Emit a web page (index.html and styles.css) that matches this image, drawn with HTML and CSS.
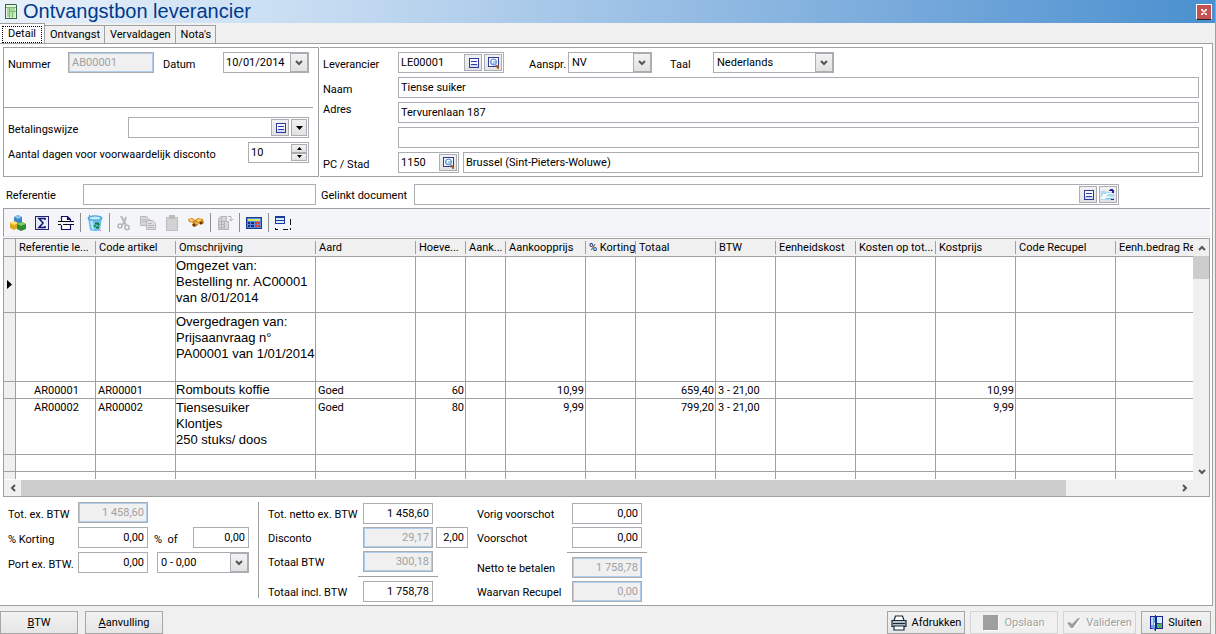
FILE: index.html
```html
<!DOCTYPE html>
<html lang="nl">
<head>
<meta charset="utf-8">
<title>Ontvangstbon leverancier</title>
<link rel="stylesheet" href="styles.css">
</head>
<body>
<svg class="sprite" aria-hidden="true">
  <symbol id="i-list" viewBox="0 0 12 12"><g shape-rendering="crispEdges"><path fill="#34389a" d="M2 1h10v10H2z"/><path fill="#f4f8ff" d="M3 2h8v5H3z"/><path fill="#cfdcf6" d="M3 7h8v3H3z"/><path fill="#34389a" d="M4 4h6v1H4zM4 7h6v1H4z"/></g></symbol>
  <symbol id="i-find" viewBox="0 0 12 12"><path fill="#34389a" d="M1 0h11v10H1z"/><path fill="#f4f8ff" d="M2 1h9v8H2z"/><circle cx="6.500" cy="5" r="3" fill="#9fcdf0" stroke="#5a88c8"/><path fill="#fff" d="M5 3h3v1H6v2H5z"/><path d="M9 8l3 4" stroke="#a85a18" stroke-width="2"/></symbol>
  <symbol id="i-folder" viewBox="0 0 14 13"><path fill="#a9dcf0" d="M0 3h5v1h8v8H0z"/><path fill="#fff" d="M2 6h3l1-1h6v1H7L5 8H2z"/><path fill="#7cc0e6" d="M1 9h11l-1 2H1z"/><path fill="#fff" d="M1 8L0 11h4l1-1h7v-1z"/><path fill="#2222a0" d="M9 1h3v1h1v3h-2V3H9zM10 11h3v1h-3zM8 2h1v1H8z"/></symbol>
  <symbol id="i-chev" viewBox="0 0 8 6"><path d="M1 1l3 3 3-3" fill="none" stroke="#555" stroke-width="2"/></symbol>
  <symbol id="i-tri" viewBox="0 0 7 4"><path d="M0 0h7L3.500 4z"/></symbol>
</svg>

<header class="titlebar">
  <svg class="titlebar__icon" viewBox="0 0 14 17"><path fill="#39654a" d="M1 1h11l1 1v14H1z"/><path fill="#e7f6df" d="M2 2h10v13H2z"/><path fill="#a5d99c" d="M3 5h2v9H3zM6 5h5v3H6z"/><path fill="#c2e8b6" d="M6 9h2v5H6zM9 9h2v5H9z"/><path fill="#7fb87c" d="M2 4h10v1H2zM5 5h1v10H5zM6 8h6v1H6zM8 9h1v6H8z"/></svg>
  <h1 class="titlebar__text">Ontvangstbon leverancier</h1>
  <button class="titlebar__close" type="button" aria-label="Sluiten"><svg width="6" height="6" viewBox="0 0 6 6"><path d="M0 .5h2M4 .5h2M0 5.500h2M4 5.500h2M1 1l4 4M5 1L1 5" stroke="#fff" stroke-width="1.500"/></svg></button>
</header>

<div class="window">
  <nav class="tabs" role="tablist">
    <button class="tab tab--active" type="button" role="tab" aria-selected="true"><span class="tab__focus">Detail</span></button>
    <button class="tab" type="button" role="tab">Ontvangst</button>
    <button class="tab" type="button" role="tab">Vervaldagen</button>
    <button class="tab" type="button" role="tab">Nota's</button>
  </nav>

  <main class="panel">
    <div class="groups">
      <section class="group group--doc">
        <div class="group__top row">
          <label class="label label--number" for="nummer">Nummer</label>
          <input class="field field--number" id="nummer" value="AB00001" disabled>
          <label class="label label--date" for="datum">Datum</label>
          <div class="box box--date"><input class="box__input" id="datum" value="10/01/2014"><button class="drop" type="button" aria-label="Kalender"><svg width="8" height="6"><use href="#i-chev"/></svg></button></div>
        </div>
        <div class="group__bottom">
          <div class="row row--between">
            <label class="label" for="betaling">Betalingswijze</label>
            <div class="box box--payment"><input class="box__input" id="betaling"><button class="mini" type="button" aria-label="Lijst"><svg width="12" height="12"><use href="#i-list"/></svg></button><button class="mini mini--narrow" type="button" aria-label="Openen"><svg width="7" height="4"><use href="#i-tri"/></svg></button></div>
          </div>
          <div class="row row--between">
            <label class="label" for="dagen">Aantal dagen voor voorwaardelijk disconto</label>
            <div class="box box--days"><input class="box__input" id="dagen" value="10"><span class="spin"><button class="spin__btn" type="button" aria-label="Meer"><svg class="flip" width="5" height="3"><use href="#i-tri"/></svg></button><button class="spin__btn" type="button" aria-label="Minder"><svg width="5" height="3"><use href="#i-tri"/></svg></button></span></div>
          </div>
        </div>
      </section>

      <section class="group group--supplier">
        <label class="label" for="lev">Leverancier</label>
        <div class="row">
          <div class="box box--supplier"><input class="box__input" id="lev" value="LE00001"><button class="mini" type="button" aria-label="Lijst"><svg width="12" height="12"><use href="#i-list"/></svg></button><button class="mini" type="button" aria-label="Zoeken"><svg width="12" height="12"><use href="#i-find"/></svg></button></div>
          <label class="label label--salutation" for="aanspr">Aanspr.</label>
          <div class="box box--salutation"><select class="box__select" id="aanspr"><option>NV</option></select><span class="drop drop--over"><svg width="8" height="6"><use href="#i-chev"/></svg></span></div>
          <label class="label label--language" for="taal">Taal</label>
          <div class="box box--language"><select class="box__select" id="taal"><option>Nederlands</option></select><span class="drop drop--over"><svg width="8" height="6"><use href="#i-chev"/></svg></span></div>
        </div>
        <label class="label" for="naam">Naam</label>
        <input class="field" id="naam" value="Tiense suiker">
        <label class="label label--top" for="adres">Adres</label>
        <input class="field" id="adres" value="Tervurenlaan 187">
        <span></span>
        <input class="field" aria-label="Adres 2">
        <label class="label" for="pc">PC / Stad</label>
        <div class="row">
          <div class="box box--postcode"><input class="box__input" id="pc" value="1150"><button class="mini" type="button" aria-label="Zoeken"><svg width="12" height="12"><use href="#i-find"/></svg></button></div>
          <input class="field field--city" aria-label="Stad" value="Brussel (Sint-Pieters-Woluwe)">
        </div>
      </section>
    </div>

    <div class="refs row">
      <label class="label label--ref" for="ref">Referentie</label>
      <input class="field field--ref" id="ref">
      <label class="label label--linked" for="doc">Gelinkt document</label>
      <div class="box box--linked"><input class="box__input" id="doc"><button class="mini" type="button" aria-label="Lijst"><svg width="12" height="12"><use href="#i-list"/></svg></button><button class="mini" type="button" aria-label="Map openen"><svg width="14" height="13"><use href="#i-folder"/></svg></button></div>
    </div>

    <div class="toolbar" role="toolbar">
      <button class="tool" type="button" aria-label="Artikelen"><svg viewBox="0 0 16 16"><path fill="#3c82c4" d="M4 2l4-2 4 2v5L8 9 4 7z"/><path fill="#8cc4ec" d="M4 2l4-2 4 2-4 2z"/><path fill="#e0a820" d="M0 8l4-2 4 2v5l-4 2-4-2z"/><path fill="#ffe27a" d="M0 8l4-2 4 2-4 2z"/><path fill="#2f8a30" d="M7 9l5-2 4 2v5l-5 2-4-2z"/><path fill="#7ccc5e" d="M7 9l5-2 4 2-5 2z"/></svg></button>
      <button class="tool" type="button" aria-label="Som"><svg viewBox="0 0 16 16"><path fill="#24246e" d="M1 1h14v14H1z"/><path fill="#e4ecfa" d="M2 2h12v12H2z"/><path d="M11 5V3.500H5L9 8l-4 4.500h6V11" fill="none" stroke="#10106a" stroke-width="1.500"/></svg></button>
      <button class="tool" type="button" aria-label="Afbreken"><svg viewBox="0 0 16 16"><path d="M3.500 7V1.500h6l3 3V7M9.500 1.500v3h3M3.500 10v4.500h9V10" fill="#fff" stroke="#10106a" stroke-width="1.200"/><path d="M0 6.500h16M0 9.500h3M5 9.500h11" stroke="#111" stroke-width="1.200"/></svg></button>
      <span class="tool-sep"></span>
      <button class="tool" type="button" aria-label="Verwijderen"><svg viewBox="0 0 16 16"><path fill="#6cc0ea" d="M1 3h14l-2 12-2 1H5l-2-1z"/><path fill="#b4e4f8" d="M3 6h3l1 9H5z"/><ellipse cx="8" cy="3" rx="7.500" ry="2.800" fill="#4aa2dc"/><ellipse cx="8" cy="3" rx="5.500" ry="1.600" fill="#c6ecfa"/><path d="M8 8.500h3l1 2M12 12.500H9M8 12l-.5-2" fill="none" stroke="#127a3a" stroke-width="1.800"/><path fill="#e040e0" d="M2 0h1v1H2zM13 15h1v1h-1z"/></svg></button>
      <span class="tool-sep"></span>
      <button class="tool" type="button" aria-label="Knippen" disabled><svg viewBox="0 0 16 16"><path d="M5 1l5 9M10 2L8 8l-2 2" stroke="#b8b8b8" stroke-width="2" fill="none"/><circle cx="4" cy="11" r="2" fill="none" stroke="#b8b8b8" stroke-width="1.600"/><circle cx="11" cy="12.500" r="2.200" fill="none" stroke="#b8b8b8" stroke-width="1.600"/></svg></button>
      <button class="tool" type="button" aria-label="Kopiëren" disabled><svg viewBox="0 0 16 16"><path fill="#d8d8d8" stroke="#b8b8b8" d="M.5 1.500h6l3 3v6h-9z"/><path fill="#dedede" stroke="#b8b8b8" d="M6.500 5.500h6l3 3v6h-9z"/><path d="M2 4.500h4M2 6.500h4M8 8.500h4M8 10.500h6M8 12.500h6" stroke="#b8b8b8"/></svg></button>
      <button class="tool" type="button" aria-label="Plakken" disabled><svg viewBox="0 0 16 16"><path fill="#d2d2d2" stroke="#bcbcbc" d="M2.500 2.500h11v13h-11z"/><path fill="#bcbcbc" d="M5 0h6v4H5z"/></svg></button>
      <button class="tool" type="button" aria-label="Zoeken"><svg viewBox="0 0 16 16"><path fill="#d08c20" d="M0 4l4-1 3 2 3-2 5 1 1 4-2 1-3-1-1 2-3 2-3-2 1-2-4-1z"/><path fill="#f8d070" d="M1 4l3 0 2 2-3 1zM8 5l3-1 3 1-3 2z"/><circle cx="6" cy="10" r="1.600" fill="#6a3408"/><circle cx="13" cy="8" r="1.600" fill="#6a3408"/><path fill="#f0b040" d="M7 7h3v2H7z"/></svg></button>
      <span class="tool-sep"></span>
      <button class="tool" type="button" aria-label="Overnemen" disabled><svg viewBox="0 0 16 16"><path fill="#d4d4d4" stroke="#b4b4b4" d="M1.500 3.500l2-2h6v9l-2 4h-6z"/><path d="M1 6.500h8M1 9.500h8M1 12.500h7M4.500 3v11" stroke="#b4b4b4"/><path fill="#d8d8d8" stroke="#b4b4b4" d="M7.500 6.500h4v8h-4z"/><path d="M11 1.500h3v4M12 4l2 2 2-2" fill="none" stroke="#b4b4b4"/></svg></button>
      <span class="tool-sep"></span>
      <button class="tool" type="button" aria-label="Rekenmachine"><svg viewBox="0 0 16 16"><path fill="#1a3a9a" d="M0 2h16v12H0z"/><path fill="#5a8ad8" d="M1 3h14v10H1z"/><path fill="#d4e86a" d="M2 4h12v2H2z"/><path fill="#1c2c80" d="M2 7h2v2H2zM5 7h3v2H5zM2 10h2v2H2zM5 10h3v2H5z"/><path fill="#e03830" d="M9 7h2v2H9zM12 7h2v2h-2zM9 10h2v2H9zM12 10h2v2h-2z"/></svg></button>
      <span class="tool-sep"></span>
      <button class="tool" type="button" aria-label="Velden"><svg viewBox="0 0 16 16" shape-rendering="crispEdges"><path fill="#1c3c9c" d="M0 1h10v8H0z"/><path fill="#dbe8fb" d="M1 3h8v2H1zM1 6h8v2H1z"/><path fill="#111" d="M15 4h1v6h-1zM0 13h1v2H0zM0 14h3v1H0zM8 14h5v1H8zM15 13h1v2h-1z"/></svg></button>
    </div>

    <div class="grid">
      <div class="grid__main">
        <div class="grid__view">
          <table class="lines">
            <colgroup><col class="w12"><col class="w80"><col class="w80"><col class="w140"><col class="w100"><col class="w50"><col class="w40"><col class="w80"><col class="w50"><col class="w80"><col class="w60"><col class="w80"><col class="w80"><col class="w80"><col class="w100"><col></colgroup>
            <thead><tr><th class="mark"></th><th><span>Referentie le...</span></th><th><span>Code artikel</span></th><th><span>Omschrijving</span></th><th><span>Aard</span></th><th><span>Hoeve...</span></th><th><span>Aank...</span></th><th><span>Aankoopprijs</span></th><th><span>% Korting</span></th><th><span>Totaal</span></th><th><span>BTW</span></th><th><span>Eenheidskost</span></th><th><span>Kosten op tot...</span></th><th><span>Kostprijs</span></th><th><span>Code Recupel</span></th><th><span>Eenh.bedrag Re</span></th></tr></thead>
            <tbody>
              <tr class="h56"><td class="mark mark--current"><svg width="5" height="9" viewBox="0 0 5 9"><path d="M0 0l5 4.500L0 9z"/></svg></td><td></td><td></td><td class="desc">Omgezet van:<br>Bestelling nr. AC00001<br>van 8/01/2014</td><td></td><td></td><td></td><td></td><td></td><td></td><td></td><td></td><td></td><td></td><td></td><td></td></tr>
              <tr class="h69"><td class="mark"></td><td></td><td></td><td class="desc">Overgedragen van:<br>Prijsaanvraag n°<br>PA00001 van 1/01/2014</td><td></td><td></td><td></td><td></td><td></td><td></td><td></td><td></td><td></td><td></td><td></td><td></td></tr>
              <tr class="h17"><td class="mark"></td><td class="supref">AR00001</td><td>AR00001</td><td class="desc">Rombouts koffie</td><td>Goed</td><td class="num">60</td><td></td><td class="num">10,99</td><td></td><td class="num">659,40</td><td>3 - 21,00</td><td></td><td></td><td class="num">10,99</td><td></td><td></td></tr>
              <tr class="h56"><td class="mark"></td><td class="supref">AR00002</td><td>AR00002</td><td class="desc">Tiensesuiker<br>Klontjes<br>250 stuks/ doos</td><td>Goed</td><td class="num">80</td><td></td><td class="num">9,99</td><td></td><td class="num">799,20</td><td>3 - 21,00</td><td></td><td></td><td class="num">9,99</td><td></td><td></td></tr>
              <tr class="h17"><td class="mark"></td><td></td><td></td><td></td><td></td><td></td><td></td><td></td><td></td><td></td><td></td><td></td><td></td><td></td><td></td><td></td></tr>
              <tr class="rest"><td class="mark"></td><td></td><td></td><td></td><td></td><td></td><td></td><td></td><td></td><td></td><td></td><td></td><td></td><td></td><td></td><td></td></tr>
            </tbody>
          </table>
        </div>
        <div class="vscroll"><span class="arrow"><svg class="flip" width="8" height="6"><use href="#i-chev"/></svg></span><span class="vscroll__thumb"></span><span class="arrow arrow--end"><svg width="8" height="6"><use href="#i-chev"/></svg></span></div>
      </div>
      <div class="hscroll"><span class="arrow"><svg class="left" width="8" height="6"><use href="#i-chev"/></svg></span><span class="hscroll__track"><span class="hscroll__thumb" style="width:90.5%"></span></span><span class="arrow"><svg class="right" width="8" height="6"><use href="#i-chev"/></svg></span></div>
    </div>

    <div class="totals">
      <div class="sum sum--left">
        <div class="row"><label class="label label--sum" for="tex">Tot. ex. BTW</label><input class="field field--amount" id="tex" value="1 458,60" disabled></div>
        <div class="row"><label class="label label--sum" for="kort">% Korting</label><input class="field field--amount" id="kort" value="0,00"><label class="label label--of" for="of">%&nbsp; of</label><input class="field field--amount field--of" id="of" value="0,00"></div>
        <div class="row"><label class="label label--sum" for="port">Port ex. BTW.</label><input class="field field--amount" id="port" value="0,00"><div class="box box--vat"><select class="box__select" aria-label="BTW-code"><option>0 - 0,00</option></select><span class="drop drop--over"><svg width="8" height="6"><use href="#i-chev"/></svg></span></div></div>
      </div>
      <div class="sum sum--mid">
        <div class="row"><label class="label label--mid" for="netto">Tot. netto ex. BTW</label><input class="field field--amount" id="netto" value="1 458,60"></div>
        <div class="row"><label class="label label--mid" for="disc">Disconto</label><input class="field field--amount" id="disc" value="29,17" disabled><input class="field field--pct" aria-label="Disconto %" value="2,00"></div>
        <div class="row"><label class="label label--mid" for="btw">Totaal BTW</label><input class="field field--amount" id="btw" value="300,18" disabled></div>
        <hr class="rule">
        <div class="row"><label class="label label--mid" for="incl">Totaal incl. BTW</label><input class="field field--amount" id="incl" value="1 758,78"></div>
      </div>
      <div class="sum sum--right">
        <div class="row"><label class="label label--mid" for="vorig">Vorig voorschot</label><input class="field field--amount" id="vorig" value="0,00"></div>
        <div class="row"><label class="label label--mid" for="voor">Voorschot</label><input class="field field--amount" id="voor" value="0,00"></div>
        <hr class="rule">
        <div class="row"><label class="label label--mid" for="betalen">Netto te betalen</label><input class="field field--amount" id="betalen" value="1 758,78" disabled></div>
        <div class="row"><label class="label label--mid" for="recupel">Waarvan Recupel</label><input class="field field--amount" id="recupel" value="0,00" disabled></div>
      </div>
    </div>
  </main>

  <footer class="actions">
    <button class="btn btn--plain" type="button"><span><u>B</u>TW</span></button>
    <button class="btn btn--plain" type="button"><span><u>A</u>anvulling</span></button>
    <span class="actions__gap"></span>
    <button class="btn btn--print" type="button"><svg width="16" height="16" viewBox="0 0 16 16"><path fill="#fff" stroke="#1c2836" stroke-width="1.200" d="M3 5.500L4.500 1h7L13 5.500z"/><path fill="#b8c8d4" stroke="#1c2836" stroke-width="1.200" d="M1 5.500h14v6H1z"/><path d="M2 8.500h12" stroke="#1c2836" stroke-width="1.200"/><path fill="#fff" stroke="#1c2836" stroke-width="1.200" d="M3 11h10v4H3z"/></svg>Afdrukken</button>
    <button class="btn btn--save" type="button" disabled><svg width="16" height="16" viewBox="0 0 16 16"><path fill="#fff" d="M1 1h15v15H1z"/><path fill="#9f9f9f" d="M0 0h15v15H0z"/></svg>Opslaan</button>
    <button class="btn btn--validate" type="button" disabled><svg width="14" height="12" viewBox="0 0 14 12"><path fill="#fff" d="M1 7l3-1 2 2 6-6 2 0-7 10H5z"/><path fill="#9f9f9f" d="M0 6l3-1 2 2 6-6 2 0-7 10H4z"/></svg>Valideren</button>
    <button class="btn btn--close" type="button"><svg width="13" height="16" viewBox="0 0 13 16"><path fill="#20209a" d="M0 1h5V0h1v1h7v13H6v2H5l-1-2H0z"/><path fill="#c8f0fa" d="M7 2h5v6H7z"/><path fill="#4cb848" d="M7 9l5-1v5H7z"/><path fill="#6aa8e0" d="M1 2h4v12L1 13z"/><path fill="#b8dcf4" d="M1 2h2v8H1z"/><path fill="#fff" d="M4 8h1v2H4z"/></svg>Sluiten</button>
  </footer>
</div>
</body>
</html>
```
FILE: styles.css
```css
* { box-sizing: border-box; }

:root {
  --line: #a0a0a0;
  --edge: #abadb3;
  --face: #f0f0f0;
}

body {
  display: flex;
  flex-direction: column;
  min-height: 100vh;
  margin: 0;
  background: var(--face);
  border-right: 1px solid var(--line);
  color: #000;
  font: 11px/13px Roboto, "Liberation Sans", sans-serif;
}

button, input, select { font: inherit; color: inherit; margin: 0; }
button { padding: 0; }
svg { display: block; }
.sprite { display: none; }
.flip { transform: rotate(180deg); }
.left { transform: rotate(90deg); }
.right { transform: rotate(-90deg); }

/* Title bar */
.titlebar {
  display: flex;
  align-items: center;
  height: 23px;
  padding: 0 3px 0 4px;
  background: linear-gradient(90deg, #e9f1fa 0%, #c5dbf1 27%, #78aadb 74%, #4a90cf 100%);
}
.titlebar__icon { width: 14px; height: 17px; }
.titlebar__text {
  flex: 1;
  margin: 0 0 0 5px;
  color: #003a8c;
  font: 20px/23px "Liberation Sans", sans-serif;
}
.titlebar__close {
  display: grid;
  place-items: center;
  width: 16px;
  height: 16px;
  border: 1px solid #fff;
  border-bottom-color: #222;
  background: #c75050;
}

.window { display: flex; flex: 1; flex-direction: column; padding-right: 2px; }

/* Tabs */
.tabs { display: flex; align-items: flex-end; height: 20px; }
.tab {
  height: 18px;
  padding: 0 4px 0 5px;
  border: 1px solid var(--line);
  border-width: 1px 1px 0 0;
  background: var(--face);
}
.tab--active {
  height: 21px;
  margin-bottom: -1px;
  padding: 0 2px;
  background: #fff;
}
.tab__focus { display: block; height: 17px; padding: 0 5px; border: 1px dotted #000; }

.panel {
  display: flex;
  flex: 1;
  flex-direction: column;
  padding: 3px 2px 0 3px;
  border: 1px solid var(--line);
  border-left: 0;
  background: #fff;
}

/* Form pieces */
.row { display: flex; }
.row--between { justify-content: space-between; }
.label { padding-top: 6px; white-space: nowrap; }
.label--top { padding-top: 1px; }

.field, .box { height: 21px; border: 1px solid var(--edge); background: #fff; }
.field { min-width: 0; padding: 0 2px 1px; border-radius: 0; }
.field:disabled {
  background: var(--face);
  box-shadow: inset 0 0 0 1px #b0cdec;
  color: var(--line);
}
.box { position: relative; display: flex; gap: 2px; padding: 1px; }
.box__input, .box__select {
  flex: 1;
  width: 0;
  min-width: 0;
  padding: 0 1px 1px;
  border: 0;
  background: none;
  outline: 0;
}
.box__select { padding-left: 2px; appearance: none; }

.mini, .drop, .spin__btn {
  display: grid;
  place-items: center;
  border: 1px solid var(--edge);
  background: linear-gradient(#f2f2f2, #e2e2e2);
}
.mini { width: 18px; }
.mini--narrow { width: 16px; }
.drop { width: 18px; margin: -1px; }
.drop--over { position: absolute; inset: 1px 1px 1px auto; pointer-events: none; }
.spin { display: grid; width: 16px; grid-template-rows: 1fr 1fr; }

/* Header groups */
.groups { display: flex; gap: 1px; padding-right: 7px; }
.group { border: 1px solid var(--line); }
.group--doc { width: 316px; padding: 0 5px 0 0; }
.group__top { height: 60px; padding: 4px 0 0 4px; border-bottom: 1px solid var(--line); }
.group__bottom { display: grid; gap: 4px; padding: 9px 4px 12px; }
.label--number { width: 60px; }
.field--number { width: 86px; padding-left: 3px; }
.label--date { width: 69px; padding-left: 9px; }
.box--date { width: 86px; }
.box--payment { width: 181px; }
.box--days { width: 61px; }

.group--supplier {
  display: grid;
  flex: 1;
  grid-template-columns: 75px 1fr;
  gap: 4px 0;
  padding: 4px 3px 3px;
  border-left: 0;
}
.box--supplier { width: 106px; }
.label--salutation { width: 64px; padding-left: 25px; }
.box--salutation { width: 84px; }
.label--language { width: 61px; padding-left: 18px; }
.box--language { width: 121px; }
.box--postcode { width: 61px; margin-right: 4px; }
.field--city { flex: 1; }

.refs { padding: 7px 0 3px 3px; }
.refs .label { padding-top: 5px; }
.label--ref { width: 77px; }
.field--ref { width: 233px; }
.label--linked { width: 98px; padding-left: 5px; }
.box--linked { flex: 1; max-width: 705px; }

/* Toolbar */
.toolbar {
  display: flex;
  align-items: center;
  height: 29px;
  padding-left: 2px;
  border: 1px solid var(--line);
  border-width: 1px 0 0 1px;
  border-bottom: 1px solid #e6e6e8;
  background: #f4f5f8;
}
.tool { width: 24px; padding: 0 4px; border: 0; background: none; }
.tool svg { width: 16px; height: 16px; }
.tool-sep { width: 1px; height: 19px; margin: 0 2px; background: #909090; }

/* Line grid */
.grid { display: flex; flex: 1; flex-direction: column; margin-top: 1px; border: 1px solid var(--line); }
.grid__main { display: flex; flex: 1; }
.grid__view { display: flex; flex: 1; align-items: flex-start; min-width: 0; overflow: hidden; }
.lines { width: 100%; table-layout: fixed; border-collapse: separate; border-spacing: 0; }
.w12 { width: 12px; }
.w40 { width: 40px; }
.w50 { width: 50px; }
.w60 { width: 60px; }
.w80 { width: 80px; }
.w100 { width: 100px; }
.w140 { width: 140px; }

.lines th {
  height: 18px;
  padding: 2px 0;
  border-bottom: 1px solid var(--line);
  background: var(--face);
  font-weight: 400;
  text-align: left;
}
.lines th span {
  display: block;
  padding-left: 3px;
  border-right: 1px solid var(--line);
  overflow: hidden;
  white-space: nowrap;
}
.lines th:last-child span, .lines td:last-child { border-right: 0; }
.lines td {
  padding: 2px 1px 0 2px;
  border: 1px solid var(--line);
  border-width: 0 1px 1px 0;
  vertical-align: top;
  white-space: nowrap;
}
.lines .mark { border-right: 1px solid var(--line); background: var(--face); }
.lines .mark--current { padding: 0 0 0 3px; vertical-align: middle; }
.lines .desc { padding: 1px 0 0; font: 13px/16px "Liberation Sans", sans-serif; }
.lines .supref { padding-left: 18px; }
.lines .num { text-align: right; }
.lines .rest td { border-bottom: 0; padding: 0; height: 7px; }
.lines .h17 .desc { padding: 0; }
.lines .h17 td { height: 17px; }
.lines .h56 td { height: 56px; }
.lines .h69 td { height: 69px; }

.vscroll { display: flex; flex-direction: column; width: 16px; background: var(--face); }
.vscroll__thumb { height: 23px; background: #cdcdcd; }
.arrow { display: grid; place-items: center; width: 17px; height: 17px; }
.arrow--end { margin-top: auto; }
.hscroll { display: flex; height: 16px; padding-right: 16px; background: var(--face); }
.hscroll .arrow { height: 16px; }
.hscroll__track { display: flex; flex: 1; }
.hscroll__thumb { background: #cdcdcd; }

/* Totals */
.totals { display: flex; align-items: flex-start; padding: 5px 0 3px 5px; }
.sum { display: grid; align-content: start; }
.sum--left { gap: 4px; height: 96px; padding-right: 9px; border-right: 1px solid var(--line); }
.sum--mid, .sum--right { gap: 3px; padding-top: 1px; }
.sum--mid { padding-left: 9px; }
.sum--right { padding-left: 9px; }
.label--sum { width: 70px; }
.label--mid { width: 95px; padding-top: 5px; }
.label--of { width: 45px; padding-left: 6px; }
.field--amount { width: 70px; padding-right: 3px; text-align: right; }
.field--of { width: 56px; }
.field--pct { width: 32px; margin-left: 3px; padding-right: 3px; text-align: right; }
.box--vat { width: 92px; margin-left: 9px; }
.rule {
  justify-self: end;
  width: 80px;
  height: 1px;
  margin: 1px 0;
  border: 0;
  background: var(--line);
}
.sum--mid .rule { margin-right: 30px; }
.sum--right .rule { margin-right: -5px; }

/* Actions */
.actions { display: flex; gap: 5px; padding: 5px 2px 0 0; }
.actions__gap { flex: 1; }
.btn {
  display: flex;
  align-items: center;
  justify-content: center;
  gap: 5px;
  height: 23px;
  border: 1px solid #a6a6a6;
  background: linear-gradient(#f2f2f2, #e6e6e6);
  white-space: nowrap;
}
.btn:disabled { border-color: #d4d4d4; background: var(--face); color: #a0a0a0; text-shadow: 1px 1px #fff; }
.btn--plain { width: 78px; margin-right: 2px; }
.btn--print { width: 78px; }
.btn--save { width: 88px; }
.btn--validate { width: 73px; }
.btn--close { width: 70px; }
```
